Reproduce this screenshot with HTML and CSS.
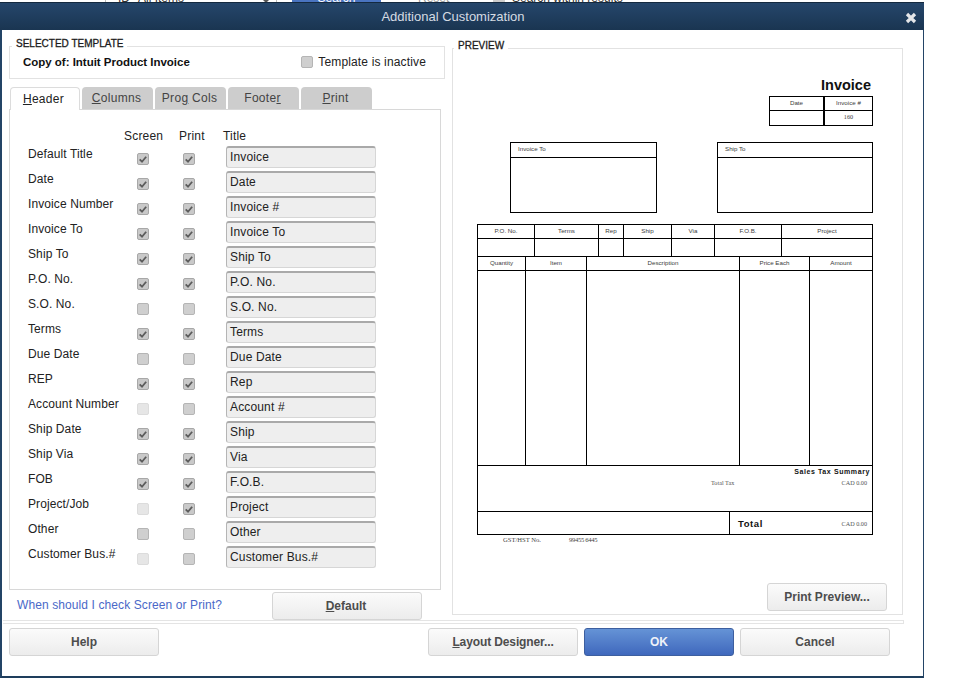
FILE: index.html
```html
<!DOCTYPE html>
<html>
<head>
<meta charset="utf-8">
<title>Additional Customization</title>
<link rel="stylesheet" href="styles.css">
</head>
<body>
<div class="backdrop">
  <span class="bd-id">ID</span>
  <span class="bd-select">All Items<i class="bd-arrow"></i></span>
  <span class="bd-btn">Search</span>
  <span class="bd-reset">Reset</span>
  <span class="bd-check"></span>
  <span class="bd-results">Search within results</span>
</div>
<div class="dialog">
  <header class="titlebar">
    <span>Additional Customization</span>
    <svg class="close" width="12" height="12" viewBox="0 0 12 12"><path d="M2 2l8 8M10 2l-8 8" stroke="#e4e6e9" stroke-width="3.2" fill="none"/></svg>
  </header>
  <div class="main">
    <section class="left">
      <div class="template">
        <span class="legend legend-template">SELECTED TEMPLATE</span>
        <strong class="template-name">Copy of: Intuit Product Invoice</strong>
        <label class="inactive"><span class="cb"></span>Template is inactive</label>
      </div>
      <nav class="tabs">
        <span class="tab active"><span><u>H</u>eader</span></span>
        <span class="tab"><span><u>C</u>olumns</span></span>
        <span class="tab"><span>Pro<u>g</u> Cols</span></span>
        <span class="tab"><span>Foote<u>r</u></span></span>
        <span class="tab"><span><u>P</u>rint</span></span>
      </nav>
      <div class="panel">
        <div class="heads"><span>Screen</span><span>Print</span><span>Title</span></div>
        <div class="row"><span class="lbl">Default Title</span><span class="cb on"><svg viewBox="0 0 12 12"><path d="M2 6.5l2.8 2.8 5-6"/></svg></span><span class="cb on"><svg viewBox="0 0 12 12"><path d="M2 6.5l2.8 2.8 5-6"/></svg></span><span class="field">Invoice</span></div>
        <div class="row"><span class="lbl">Date</span><span class="cb on"><svg viewBox="0 0 12 12"><path d="M2 6.5l2.8 2.8 5-6"/></svg></span><span class="cb on"><svg viewBox="0 0 12 12"><path d="M2 6.5l2.8 2.8 5-6"/></svg></span><span class="field">Date</span></div>
        <div class="row"><span class="lbl">Invoice Number</span><span class="cb on"><svg viewBox="0 0 12 12"><path d="M2 6.5l2.8 2.8 5-6"/></svg></span><span class="cb on"><svg viewBox="0 0 12 12"><path d="M2 6.5l2.8 2.8 5-6"/></svg></span><span class="field">Invoice #</span></div>
        <div class="row"><span class="lbl">Invoice To</span><span class="cb on"><svg viewBox="0 0 12 12"><path d="M2 6.5l2.8 2.8 5-6"/></svg></span><span class="cb on"><svg viewBox="0 0 12 12"><path d="M2 6.5l2.8 2.8 5-6"/></svg></span><span class="field">Invoice To</span></div>
        <div class="row"><span class="lbl">Ship To</span><span class="cb on"><svg viewBox="0 0 12 12"><path d="M2 6.5l2.8 2.8 5-6"/></svg></span><span class="cb on"><svg viewBox="0 0 12 12"><path d="M2 6.5l2.8 2.8 5-6"/></svg></span><span class="field">Ship To</span></div>
        <div class="row"><span class="lbl">P.O. No.</span><span class="cb on"><svg viewBox="0 0 12 12"><path d="M2 6.5l2.8 2.8 5-6"/></svg></span><span class="cb on"><svg viewBox="0 0 12 12"><path d="M2 6.5l2.8 2.8 5-6"/></svg></span><span class="field">P.O. No.</span></div>
        <div class="row"><span class="lbl">S.O. No.</span><span class="cb"></span><span class="cb"></span><span class="field">S.O. No.</span></div>
        <div class="row"><span class="lbl">Terms</span><span class="cb on"><svg viewBox="0 0 12 12"><path d="M2 6.5l2.8 2.8 5-6"/></svg></span><span class="cb on"><svg viewBox="0 0 12 12"><path d="M2 6.5l2.8 2.8 5-6"/></svg></span><span class="field">Terms</span></div>
        <div class="row"><span class="lbl">Due Date</span><span class="cb"></span><span class="cb"></span><span class="field">Due Date</span></div>
        <div class="row"><span class="lbl">REP</span><span class="cb on"><svg viewBox="0 0 12 12"><path d="M2 6.5l2.8 2.8 5-6"/></svg></span><span class="cb on"><svg viewBox="0 0 12 12"><path d="M2 6.5l2.8 2.8 5-6"/></svg></span><span class="field">Rep</span></div>
        <div class="row"><span class="lbl">Account Number</span><span class="cb off"></span><span class="cb"></span><span class="field">Account #</span></div>
        <div class="row"><span class="lbl">Ship Date</span><span class="cb on"><svg viewBox="0 0 12 12"><path d="M2 6.5l2.8 2.8 5-6"/></svg></span><span class="cb on"><svg viewBox="0 0 12 12"><path d="M2 6.5l2.8 2.8 5-6"/></svg></span><span class="field">Ship</span></div>
        <div class="row"><span class="lbl">Ship Via</span><span class="cb on"><svg viewBox="0 0 12 12"><path d="M2 6.5l2.8 2.8 5-6"/></svg></span><span class="cb on"><svg viewBox="0 0 12 12"><path d="M2 6.5l2.8 2.8 5-6"/></svg></span><span class="field">Via</span></div>
        <div class="row"><span class="lbl">FOB</span><span class="cb on"><svg viewBox="0 0 12 12"><path d="M2 6.5l2.8 2.8 5-6"/></svg></span><span class="cb on"><svg viewBox="0 0 12 12"><path d="M2 6.5l2.8 2.8 5-6"/></svg></span><span class="field">F.O.B.</span></div>
        <div class="row"><span class="lbl">Project/Job</span><span class="cb off"></span><span class="cb on"><svg viewBox="0 0 12 12"><path d="M2 6.5l2.8 2.8 5-6"/></svg></span><span class="field">Project</span></div>
        <div class="row"><span class="lbl">Other</span><span class="cb"></span><span class="cb"></span><span class="field">Other</span></div>
        <div class="row"><span class="lbl">Customer Bus.#</span><span class="cb off"></span><span class="cb"></span><span class="field">Customer Bus.#</span></div>
      </div>
      <div class="under">
        <a class="link">When should I check Screen or Print?</a>
        <button class="btn default"><u>D</u>efault</button>
      </div>
    </section>
    <section class="preview">
      <span class="legend legend-preview">PREVIEW</span>
      <div class="sheet">
        <div class="inv-title">Invoice</div>
        <div class="inv-meta">
          <span class="c">Date</span><span class="c">Invoice #</span><span class="c"></span><span class="c serif">160</span>
        </div>
        <div class="addr">
          <div class="addr-box to"><span class="addr-head">Invoice To</span></div>
          <div class="addr-box ship"><span class="addr-head">Ship To</span></div>
        </div>
        <div class="grid-a">
          <span>P.O. No.</span><span>Terms</span><span>Rep</span><span>Ship</span><span>Via</span><span>F.O.B.</span><span>Project</span>
          <span></span><span></span><span></span><span></span><span></span><span></span><span></span>
        </div>
        <div class="grid-b">
          <span>Quantity</span><span>Item</span><span>Description</span><span>Price Each</span><span>Amount</span>
          <span></span><span></span><span></span><span></span><span></span>
        </div>
        <div class="tax">
          <div class="tax-title">Sales Tax Summary</div>
          <div class="tax-line"><span>Total Tax</span><span>CAD 0.00</span></div>
        </div>
        <div class="total">
          <div></div>
          <div class="total-cell"><b>Total</b><span>CAD 0.00</span></div>
        </div>
        <div class="gst"><span>GST/HST No.</span><span class="gst-no">99455 6445</span></div>
      </div>
      <div class="preview-foot"><button class="btn print">Print Preview...</button></div>
    </section>
  </div>
  <div class="sep"></div>
  <footer class="foot">
    <button class="btn">Help</button>
    <span class="foot-right">
      <button class="btn layout"><u>L</u>ayout Designer...</button>
      <button class="btn ok">OK</button>
      <button class="btn">Cancel</button>
    </span>
  </footer>
</div>
</body>
</html>
```

FILE: styles.css
```css
* { box-sizing: border-box; }
html, body { margin: 0; padding: 0; background: #fff; }
body {
  width: 956px;
  height: 680px;
  overflow: hidden;
  font-family: "Liberation Sans", Arial, sans-serif;
  font-size: 12px;
  color: #111;
}
u { text-decoration: underline; }

/* sliver of the window behind the dialog */
.backdrop {
  height: 2px;
  overflow: hidden;
  display: flex;
  align-items: flex-end;
  font-size: 12px;
  line-height: 14px;
  color: #333;
  background: #fff;
}
.backdrop span { height: 14px; margin-top: -12px; margin-bottom: -3px; flex: none; }
.bd-id { margin-left: 105px; width: 33px; padding-left: 12px; border-left: 1px solid #bbb; }
.bd-select { width: 139px; position: relative; border-right: 1px solid #bbb; }
.bd-arrow {
  position: absolute; left: 123px; top: 7px;
  border: 5px solid transparent; border-top-color: #555; border-bottom: 0;
}
.backdrop .bd-btn { margin-left: 15px; width: 89px; background: #4a74c0; color: #fff; text-align: center; }
.backdrop .bd-reset { margin-left: 37px; width: 63px; color: #999; }
.backdrop .bd-check { width: 12px; margin-left: 12px; background: #ccc; }
.backdrop .bd-results { margin-left: 7px; }

.dialog {
  width: 924px;
  height: 676px;
  background: #fff;
  border-left: 2px solid #234466;
  border-right: 1px solid #234466;
  border-bottom: 2px solid #1e3d5c;
  display: flex;
  flex-direction: column;
}
.titlebar {
  margin-left: -2px;
  margin-right: -1px;
  height: 28px;
  flex: none;
  border-top: 1px solid #14293f;
  background: linear-gradient(#25466b, #1a3551);
  color: #d5dbe3;
  font-size: 13px;
  padding-right: 18px;
  display: flex;
  align-items: center;
  justify-content: center;
  position: relative;
}
.close { position: absolute; right: 7px; top: 9px; }

.main {
  display: flex;
  height: 590px;
  flex: none;
}
.left {
  width: 450px;
  flex: none;
  padding: 16px 0 0 7px;
}
.legend {
  position: absolute;
  top: -9px;
  background: #fff;
  padding: 0 4px;
  font-size: 10px;
  line-height: 12px;
  color: #1c1c1c;
  -webkit-text-stroke: 0.3px #1c1c1c;
}
.template {
  position: relative;
  width: 436px;
  height: 33px;
  border: 1px solid #e2e2e2;
  display: flex;
  align-items: center;
  justify-content: space-between;
  padding: 0 18px 0 13px;
}
.legend-template { left: 2px; }
.template-name { font-size: 11.5px; margin-bottom: 2px; letter-spacing: -.02px; }
.inactive { display: flex; align-items: center; gap: 5px; color: #222; letter-spacing: .15px; margin-bottom: 2px; }

.tabs {
  display: flex;
  gap: 2px;
  margin: 8px 0 0 1px;
  height: 23px;
  position: relative;
  z-index: 1;
}
.tab {
  width: 71px;
  height: 22px;
  background: #cdcdcd;
  border-radius: 4px 4px 0 0;
  display: flex;
  align-items: center;
  justify-content: center;
  color: #444;
  letter-spacing: .3px;
  padding-right: 2px;
}
.tab.active {
  width: 70px;
  height: 23px;
  background: #fff;
  border: 1px solid #dcdcdc;
  border-bottom: 0;
  color: #222;
  padding-right: 3px;
}
.panel {
  width: 432px;
  height: 481px;
  margin-top: -1px;
  border: 1px solid #d8d8d8;
  padding: 20px 0 0 18px;
}
.heads {
  display: flex;
  height: 12px;
  line-height: 12px;
  margin-left: 96px;
  color: #222;
  letter-spacing: .2px;
}
.heads span:nth-child(1) { width: 55px; }
.heads span:nth-child(2) { width: 44px; }
.row {
  display: grid;
  grid-template-columns: 109px 12px 46px 181px;
  height: 25px;
  align-items: center;
}
.heads + .row { margin-top: 4px; }
.lbl {
  color: #222;
  letter-spacing: .1px;
  align-self: start;
  line-height: 14px;
  margin-top: 1px;
}
.cb {
  width: 12px;
  height: 12px;
  display: block;
  background: #cfcfcf;
  border: 1px solid #b5b5b5;
  border-radius: 2px;
  flex: none;
}
.cb svg { display: block; width: 10px; height: 10px; fill: none; stroke: #5c5c5c; stroke-width: 2.2; }
.cb.on { background: #c9c9c9; border-color: #a8a8a8; }
.cb.off { background: #e6e6e6; border-color: #dcdcdc; }
.row .cb { margin-top: 1px; }
.row .cb:nth-child(3) { margin-left: 34px; }
.field {
  align-self: start;
  margin-left: 31px;
  width: 150px;
  height: 22px;
  background: #eee;
  border: 1px solid #d6d6d6;
  border-top: 2px solid #a9a9a9;
  border-left: 1px solid #b5b5b5;
  border-radius: 3px;
  padding: 0 3px;
  line-height: 18px;
  color: #222;
  letter-spacing: .15px;
}

.under {
  display: flex;
  align-items: flex-start;
  width: 436px;
}
.link {
  margin: 8px 0 0 8px;
  color: #4a68c8;
  letter-spacing: .1px;
  width: 255px;
  flex: none;
}
.btn {
  width: 150px;
  height: 28px;
  border: 1px solid #d5d5d5;
  border-radius: 3px;
  background: linear-gradient(#fbfbfb, #ececec);
  color: #4d4d4d;
  font: bold 12px "Liberation Sans", Arial, sans-serif;
  padding: 0;
}
.btn.default { margin-top: 2px; padding-right: 2px; }
.btn.layout { letter-spacing: -.12px; }
.btn.ok {
  background: linear-gradient(#6593d6, #3f68bd);
  border-color: #3d5f9f;
  color: #eef2f9;
}
.btn.print { width: 120px; }

.preview {
  position: relative;
  margin: 18px 0 0 0;
  width: 451px;
  height: 567px;
  border: 1px solid #e2e2e2;
  display: flex;
  flex-direction: column;
}
.legend-preview { left: 1px; }

.sheet {
  width: 396px;
  margin: 29px 0 0 24px;
  font-size: 6.2px;
  color: #3a3a3a;
}
.inv-title {
  text-align: right;
  font-weight: bold;
  font-size: 14.5px;
  line-height: 14px;
  height: 18px;
  color: #111;
  padding-right: 2px;
}
.inv-meta {
  margin-left: auto;
  width: 104px;
  height: 30px;
  border: 1px solid #000;
  display: grid;
  grid-template-columns: 55px 47px;
  grid-template-rows: 14px 14px;
}
.inv-meta .c { display: flex; align-items: center; justify-content: center; line-height: 12px; padding-bottom: 2px; }
.inv-meta .c:nth-child(odd) { border-right: 2px solid #000; }
.inv-meta .c:nth-child(-n+2) { border-bottom: 1px solid #000; }
.serif { font-family: "Liberation Serif", serif; }
.addr {
  display: flex;
  justify-content: space-between;
  margin: 16px 0 0 33px;
}
.addr-box {
  height: 71px;
  border: 1px solid #000;
}
.addr-box.to { width: 147px; }
.addr-box.ship { width: 156px; }
.addr-head {
  display: block;
  height: 15px;
  line-height: 12px;
  padding-left: 7px;
  border-bottom: 1px solid #000;
}
.grid-a, .grid-b {
  display: grid;
  border: 1px solid #000;
  text-align: center;
}
.grid-a span, .grid-b span { border-right: 1px solid #000; }
.grid-a span:nth-child(7n), .grid-b span:nth-child(5n) { border-right: 0; }
.grid-a {
  margin-top: 11px;
  height: 33px;
  grid-template-columns: 57px 64px 25px 48px 43px 67px 90px;
  grid-template-rows: 14px 17px;
}
.grid-a span:nth-child(-n+7) { border-bottom: 1px solid #000; line-height: 12px; }
.grid-b {
  margin-top: -1px;
  height: 210px;
  grid-template-columns: 48px 61px 153px 70px 62px;
  grid-template-rows: 14px 194px;
}
.grid-b span:nth-child(-n+5) { border-bottom: 1px solid #000; line-height: 12px; }
.tax {
  height: 47px;
  margin-top: -1px;
  border: 1px solid #000;
  padding-right: 2px;
}
.tax-title {
  text-align: right;
  font-size: 7px;
  font-weight: bold;
  letter-spacing: .6px;
  line-height: 11px;
  color: #111;
}
.tax-line {
  display: flex;
  justify-content: space-between;
  font-family: "Liberation Serif", serif;
  padding: 2px 3px 0 233px;
  color: #555;
}
.total {
  height: 24px;
  margin-top: -1px;
  border: 1px solid #000;
  display: grid;
  grid-template-columns: 251px 1fr;
}
.total-cell {
  border-left: 1px solid #000;
  display: flex;
  justify-content: space-between;
  align-items: center;
  padding: 0 5px 0 8px;
  font-family: "Liberation Serif", serif;
  color: #555;
}
.total-cell b {
  font: bold 9.5px "Liberation Sans", Arial, sans-serif;
  letter-spacing: .6px;
  color: #111;
}
.gst {
  display: flex;
  gap: 28px;
  padding-left: 26px;
  line-height: 9px;
  font-size: 6.6px;
  font-family: "Liberation Serif", serif;
  color: #444;
}
.gst-no { letter-spacing: -.3px; }
.preview-foot {
  margin-top: auto;
  padding: 0 15px 3px 0;
  display: flex;
  justify-content: flex-end;
}

.sep {
  flex: none;
  width: 901px;
  height: 4px;
  margin: 0 0 0 1px;
  border-top: 1px solid #e4e4e4;
  border-bottom: 1px solid #e4e4e4;
  border-right: 1px solid #e4e4e4;
}
.foot {
  display: flex;
  justify-content: space-between;
  padding: 4px 33px 0 7px;
}
.foot-right { display: flex; gap: 6px; }
```
